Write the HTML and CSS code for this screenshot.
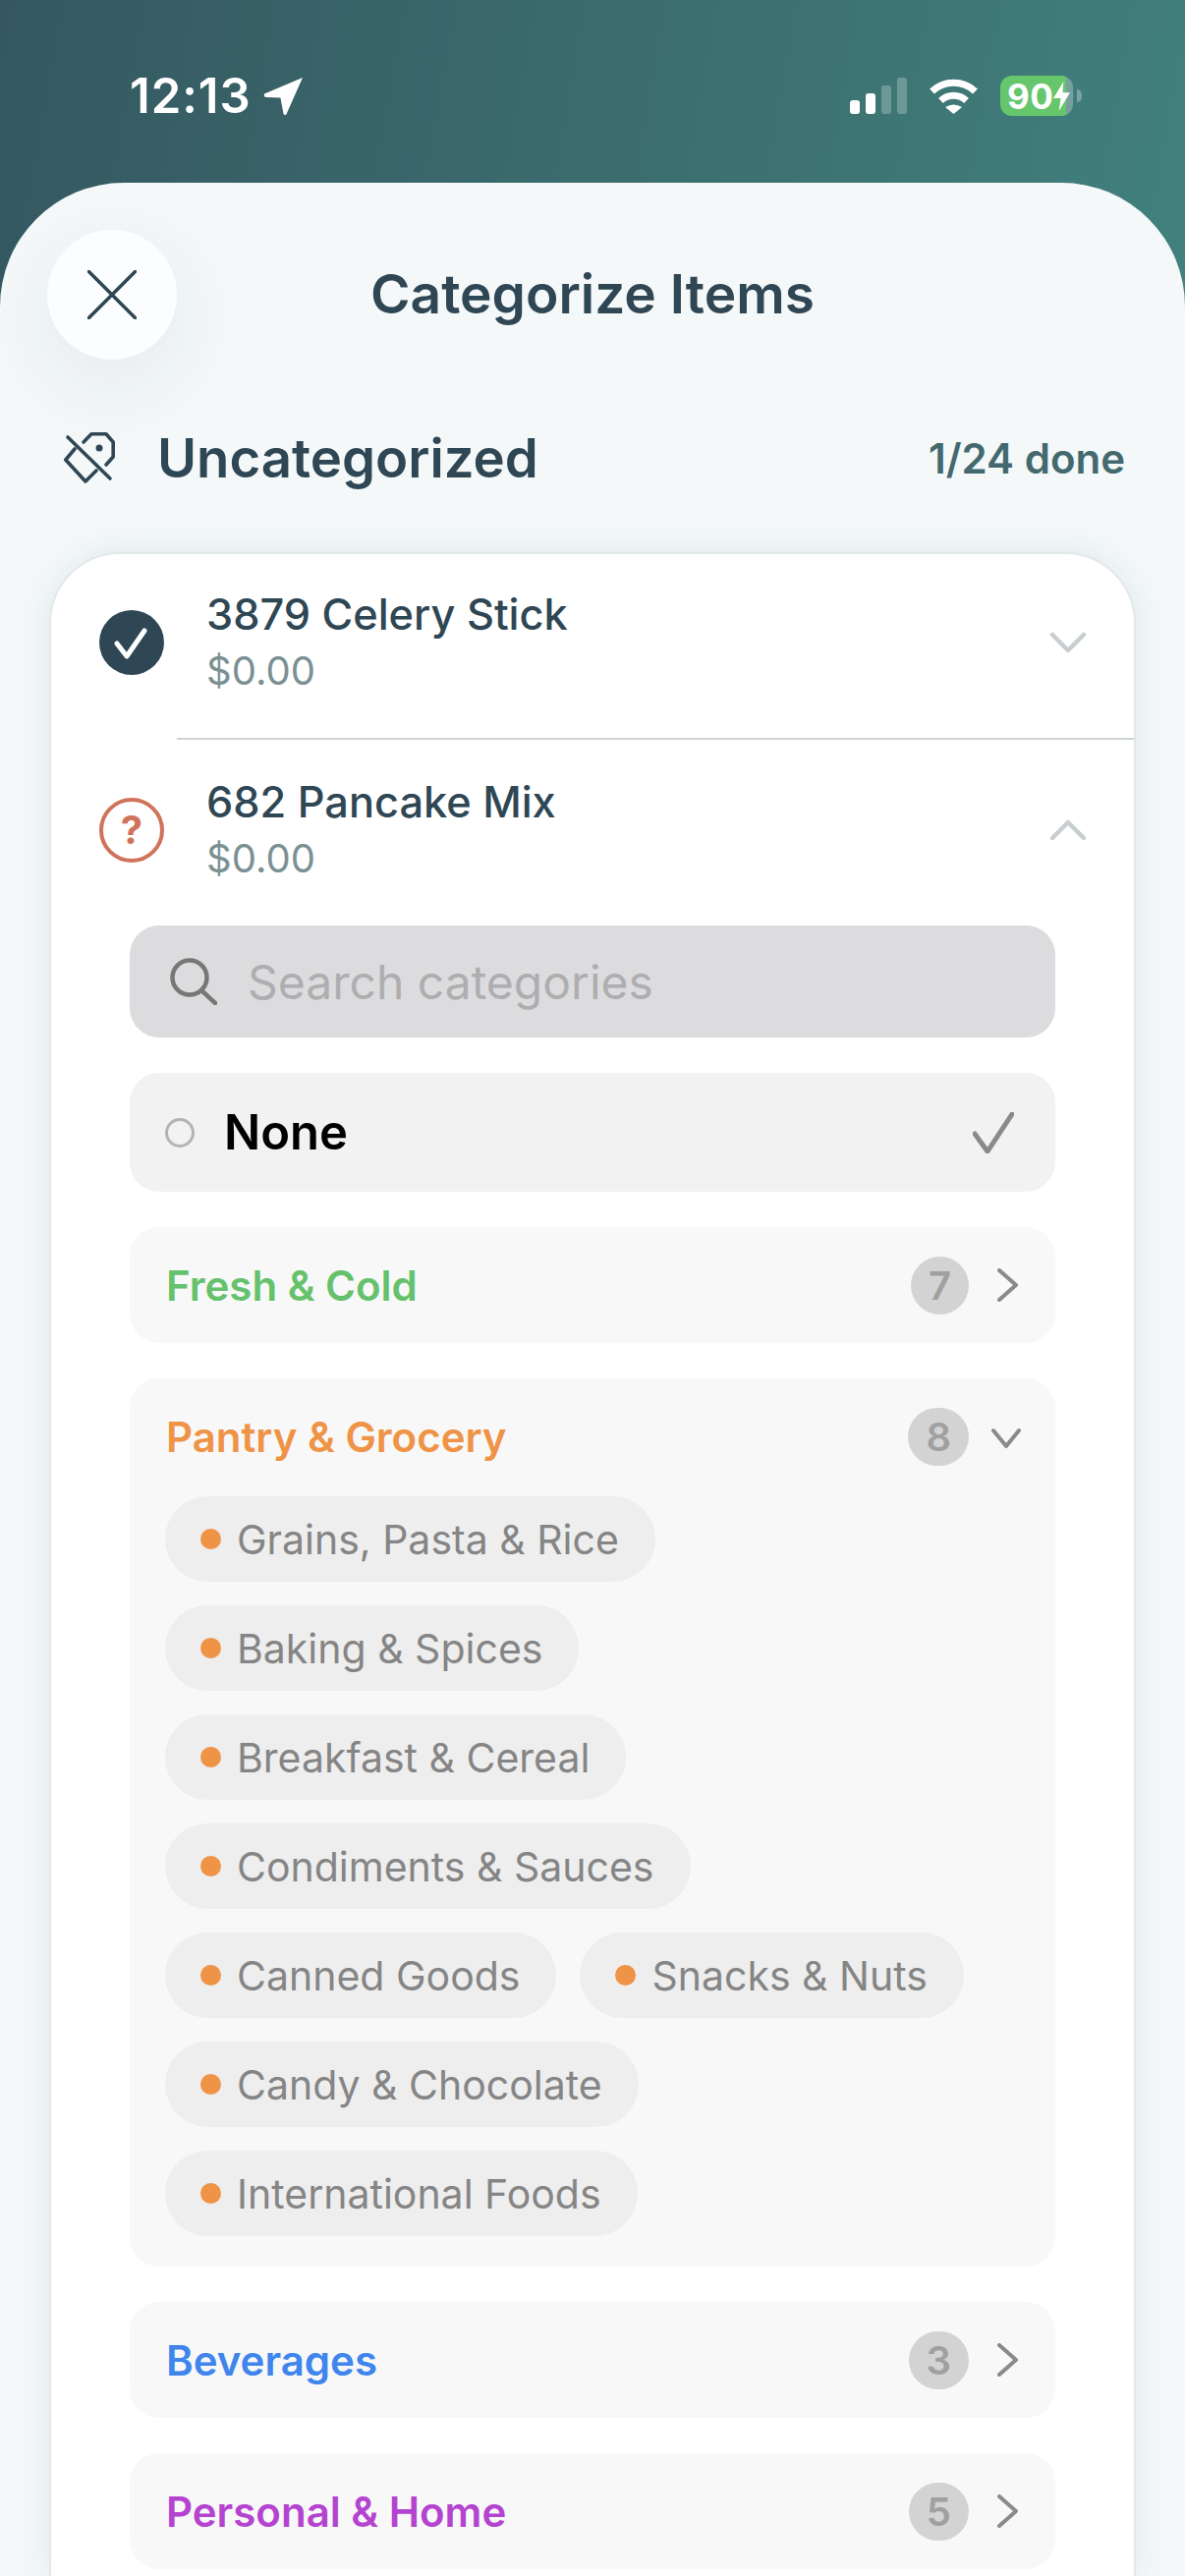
FILE: index.html
```html
<!DOCTYPE html>
<html lang="en">
<head>
  <meta charset="UTF-8">
  <meta name="viewport" content="width=device-width, initial-scale=1.0">
  <title>Categorize Items</title>
  <link rel="stylesheet" href="styles.css">
</head>
<body>
  <div class="page">
    <div class="status-bar">
      <span class="time">12:13</span>
      <svg class="loc-icon" viewBox="0 0 40 40"><path d="M39 1 L1 17 Q0 20 3 20.500 L17 21 L20 37 Q22 39 23 37 Z"/></svg>
      <div class="status-right">
        <div class="signal"><i class="b1"></i><i class="b2"></i><i class="b3 off"></i><i class="b4 off"></i></div>
        <svg class="wifi" viewBox="0 0 51 37">
          <path d="M3.500 14 A32 32 0 0 1 47.500 14" />
          <path d="M12.500 23.500 A19 19 0 0 1 38.500 23.500" />
          <path class="wedge" d="M17 30 Q25.500 25 34 30 L25.500 37 Z" />
        </svg>
        <div class="battery">
          <span>90</span>
          <svg viewBox="0 0 18 32"><path d="M11 0 L0 18 H8 L6 32 L18 12 H10 Z"/></svg>
        </div>
      </div>
    </div>

    <div class="sheet">
      <div class="sheet-head">
        <button class="close-btn">
          <svg viewBox="0 0 50 50"><path d="M1 1 L49 49 M49 1 L1 49"/></svg>
        </button>
        <h1>Categorize Items</h1>
      </div>

      <div class="section-head">
        <svg class="tag-off" viewBox="0 0 52 52">
          <path d="M4 5 L47 47"/>
          <path d="M20 10 L28 1.800 H43 L50.200 10 V25 L43 33"/>
          <path d="M11 17 L1.800 28 L22 50 L33 39"/>
          <circle cx="36" cy="16" r="3.500"/>
        </svg>
        <h2>Uncategorized</h2>
        <span class="done">1/24 done</span>
      </div>

      <div class="card">
        <div class="item item-first">
          <div class="state state-done">
            <svg viewBox="0 0 66 66"><path d="M18 34 L28 47 L46 21"/></svg>
          </div>
          <div class="item-text">
            <div class="item-name">3879 Celery Stick</div>
            <div class="item-price">$0.00</div>
          </div>
          <svg class="item-chev" viewBox="0 0 40 24"><path d="M4 4 L20 20 L36 4"/></svg>
        </div>
        <div class="divider"></div>
        <div class="item">
          <div class="state state-ask">?</div>
          <div class="item-text">
            <div class="item-name">682 Pancake Mix</div>
            <div class="item-price">$0.00</div>
          </div>
          <svg class="item-chev" viewBox="0 0 40 24"><path d="M4 20 L20 4 L36 20"/></svg>
        </div>

        <div class="picker">
          <div class="search">
            <svg viewBox="0 0 48 48"><circle cx="20" cy="20" r="17.500"/><path d="M32 33 L46 46"/></svg>
            <span>Search categories</span>
          </div>

          <div class="none-row">
            <i class="radio"></i>
            <span>None</span>
            <svg viewBox="0 0 42 42"><path d="M2 22 L15 40 L40 2"/></svg>
          </div>

          <div class="cat">
            <div class="cat-head">
              <span class="cat-name green">Fresh &amp; Cold</span>
              <span class="badge">7</span>
              <svg class="cat-chev" viewBox="0 0 30 34"><path d="M8 2 L25 17 L8 32"/></svg>
            </div>
          </div>

          <div class="cat">
            <div class="cat-head">
              <span class="cat-name orange">Pantry &amp; Grocery</span>
              <span class="badge">8</span>
              <svg class="cat-chev" viewBox="0 0 30 34"><path d="M2 11 L15 27 L28 11"/></svg>
            </div>
            <div class="chips">
              <div class="chip"><i></i>Grains, Pasta &amp; Rice</div>
              <div class="chip"><i></i>Baking &amp; Spices</div>
              <div class="chip"><i></i>Breakfast &amp; Cereal</div>
              <div class="chip"><i></i>Condiments &amp; Sauces</div>
              <div class="chip"><i></i>Canned Goods</div>
              <div class="chip"><i></i>Snacks &amp; Nuts</div>
              <div class="chip"><i></i>Candy &amp; Chocolate</div>
              <div class="chip"><i></i>International Foods</div>
            </div>
          </div>

          <div class="cat">
            <div class="cat-head">
              <span class="cat-name blue">Beverages</span>
              <span class="badge">3</span>
              <svg class="cat-chev" viewBox="0 0 30 34"><path d="M8 2 L25 17 L8 32"/></svg>
            </div>
          </div>

          <div class="cat">
            <div class="cat-head">
              <span class="cat-name purple">Personal &amp; Home</span>
              <span class="badge">5</span>
              <svg class="cat-chev" viewBox="0 0 30 34"><path d="M8 2 L25 17 L8 32"/></svg>
            </div>
          </div>
        </div>
      </div>
    </div>
  </div>
</body>
</html>
```

FILE: styles.css
```css
:root {
  --ink: #2f4754;
  --muted: #7b9093;
  --sheet: #f4f8f9;
}
* {
  box-sizing: border-box;
}
html, body {
  margin: 0;
  padding: 0;
}
body {
  font-family: Inter, "Liberation Sans", sans-serif;
  color: var(--ink);
}
svg {
  display: block;
  flex: none;
  fill: none;
  stroke-linecap: round;
  stroke-linejoin: round;
}
.page {
  width: 1206px;
  height: 2622px;
  overflow: hidden;
  display: flex;
  flex-direction: column;
  background: linear-gradient(100deg, #355860 0%, #41807c 75%, #44897f 100%);
}

/* status bar */
.status-bar {
  height: 186px;
  flex: none;
  padding: 71px 114px 0 132px;
  display: flex;
  align-items: flex-start;
  color: #fff;
}
.time {
  font-size: 49px;
  font-weight: 600;
  line-height: 54px;
  letter-spacing: 1px;
}
.loc-icon {
  width: 41px;
  height: 41px;
  margin: 7px 0 0 12px;
  fill: #fff;
}
.status-right {
  margin-left: auto;
  margin-top: 6px;
  display: flex;
  align-items: flex-start;
}
.signal {
  display: flex;
  align-items: flex-end;
  gap: 6px;
  height: 37px;
  margin-top: 2px;
}
.signal i {
  width: 10px;
  background: #fff;
  border-radius: 3px;
}
.signal .b1 { height: 14px; }
.signal .b2 { height: 21px; }
.signal .b3 { height: 29px; }
.signal .b4 { height: 37px; }
.signal .off {
  background: rgba(255, 255, 255, 0.25);
}
.wifi {
  width: 51px;
  height: 37px;
  margin: 2px 0 0 22px;
  stroke: #fff;
  stroke-width: 7;
}
.wifi path {
  stroke-linecap: butt;
}
.wifi .wedge {
  fill: #fff;
  stroke: none;
}
.battery {
  position: relative;
  width: 74px;
  height: 41px;
  margin-left: 22px;
  border-radius: 12px;
  background: linear-gradient(to right, #66c66c 91%, rgba(255, 255, 255, 0.28) 91%);
  display: flex;
  align-items: center;
  padding-left: 7px;
  font-size: 35px;
  font-weight: 700;
  letter-spacing: 0.5px;
}
.battery svg {
  width: 17px;
  height: 30px;
  fill: #fff;
}
.battery::after {
  content: "";
  position: absolute;
  right: -9px;
  top: 14px;
  width: 5px;
  height: 13px;
  border-radius: 0 6px 6px 0;
  background: rgba(255, 255, 255, 0.3);
}

/* sheet */
.sheet {
  flex: 1;
  min-height: 0;
  display: flex;
  flex-direction: column;
  background: var(--sheet);
  border-radius: 126px 126px 0 0;
}
.sheet-head {
  display: grid;
  grid-template-columns: 132px 1fr 132px;
  align-items: center;
  padding: 48px 48px 0;
}
.close-btn {
  width: 132px;
  height: 132px;
  padding: 0;
  border: none;
  border-radius: 50%;
  background: #fbfdfe;
  box-shadow: 0 24px 90px rgba(40, 50, 60, 0.08);
  display: flex;
  align-items: center;
  justify-content: center;
}
.close-btn svg {
  width: 50px;
  height: 50px;
  stroke: var(--ink);
  stroke-width: 3.5;
}
h1 {
  grid-column: 2;
  margin: -2px 0 0;
  text-align: center;
  font-size: 55px;
  font-weight: 600;
  line-height: 64px;
}
.section-head {
  height: 70px;
  margin-top: 65px;
  padding: 0 61px 0 65px;
  display: flex;
  align-items: center;
}
.tag-off {
  width: 52px;
  height: 52px;
  stroke: var(--ink);
  stroke-width: 3.6;
}
.tag-off circle {
  fill: var(--ink);
  stroke: none;
}
h2 {
  margin: 0 0 0 43px;
  font-size: 54.500px;
  font-weight: 600;
  line-height: 70px;
}
.done {
  margin-left: auto;
  font-size: 42px;
  font-weight: 600;
  color: #43696f;
}

/* item card */
.card {
  flex: 1;
  margin: 61px 50px 0;
  background: #fff;
  border: 2px solid #e3e8ea;
  border-bottom: none;
  border-radius: 72px 72px 0 0;
  box-shadow: 0 0 34px rgba(60, 100, 115, 0.1);
}
.item {
  display: flex;
  align-items: center;
  padding: 35px 47px 40px 49px;
}
.item-first {
  padding: 33px 47px 40px 49px;
}
.divider {
  height: 2px;
  margin-left: 128px;
  background: #cfd3d5;
}
.state {
  width: 66px;
  height: 66px;
  flex: none;
  border-radius: 50%;
}
.state-done {
  background: var(--ink);
}
.state-done svg {
  stroke: #fff;
  stroke-width: 5;
}
.state-ask {
  border: 4.5px solid #d0735a;
  color: #d0735a;
  font-size: 40px;
  font-weight: 700;
  line-height: 57px;
  text-align: center;
}
.item-text {
  margin-left: 43px;
  flex: 1;
}
.item-name {
  font-size: 43.300px;
  font-weight: 500;
  line-height: 56px;
  margin-bottom: 2px;
}
.item-price {
  font-size: 40px;
  line-height: 56px;
  color: var(--muted);
}
.item-chev {
  width: 40px;
  height: 24px;
  stroke: #c8ced0;
  stroke-width: 4.5;
}

/* category picker */
.picker {
  padding: 0 80px;
  display: flex;
  flex-direction: column;
  gap: 36px;
}
.search {
  height: 114px;
  padding: 0 0 0 41px;
  display: flex;
  align-items: center;
  gap: 31px;
  background: #dcdcde;
  border-radius: 30px;
  font-size: 48px;
  color: #aeaeb0;
}
.search svg {
  width: 48px;
  height: 48px;
  stroke: #777;
  stroke-width: 4.5;
}
.none-row {
  height: 121px;
  padding: 0 42px 0 36px;
  display: flex;
  align-items: center;
  background: #f2f2f2;
  border-radius: 30px;
  font-size: 49px;
  font-weight: 600;
  color: #000;
}
.none-row .radio {
  width: 30px;
  height: 30px;
  margin-right: 30px;
  border: 3px solid #b3b3b3;
  border-radius: 50%;
}
.none-row svg {
  width: 42px;
  height: 42px;
  margin-left: auto;
  stroke: #8a8a8a;
  stroke-width: 5;
}
.cat {
  background: #f8f8f8;
  border-radius: 30px;
}
.cat-head {
  height: 118px;
  padding: 0 35px 0 37px;
  display: flex;
  align-items: center;
}
.cat-name {
  font-size: 42px;
  font-weight: 600;
  margin-right: auto;
}
.green { color: #66c16c; }
.orange { color: #ef9347; }
.blue { color: #3f85ed; }
.purple { color: #b444d0; }
.badge {
  min-width: 58px;
  height: 59px;
  padding: 0 18px;
  border-radius: 30px;
  background: #d3d3d3;
  color: #a0a0a0;
  font-size: 40px;
  font-weight: 600;
  line-height: 59px;
  text-align: center;
}
.cat-chev {
  width: 30px;
  height: 34px;
  margin-left: 23px;
  stroke: #8a8a8a;
  stroke-width: 4;
}
.chips {
  margin-top: 2px;
  padding: 0 36px 31px;
  display: flex;
  flex-wrap: wrap;
  gap: 24px;
}
.chip {
  height: 87px;
  padding: 0 37px 0 36px;
  display: flex;
  align-items: center;
  gap: 16px;
  background: #eeeeee;
  border-radius: 44px;
  font-size: 41px;
  color: #858585;
}
.chip i {
  width: 21px;
  height: 21px;
  border-radius: 50%;
  background: #ef9347;
}
```
